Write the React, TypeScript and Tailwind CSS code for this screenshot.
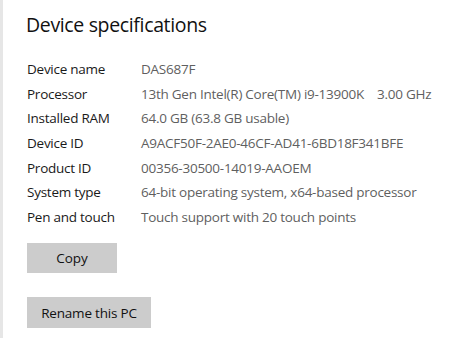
const specs = [
  { label: 'Device name', value: 'DAS687F' },
  { label: 'Processor', value: '13th Gen Intel(R) Core(TM) i9-13900K    3.00 GHz' },
  { label: 'Installed RAM', value: '64.0 GB (63.8 GB usable)' },
  { label: 'Device ID', value: 'A9ACF50F-2AE0-46CF-AD41-6BD18F341BFE' },
  { label: 'Product ID', value: '00356-30500-14019-AAOEM' },
  { label: 'System type', value: '64-bit operating system, x64-based processor' },
  { label: 'Pen and touch', value: 'Touch support with 20 touch points' },
]

export default function App() {
  return (
    <div className="flex h-[338px] w-[463px] bg-white font-['Open_Sans',sans-serif] overflow-hidden">
      <div className="w-[3px] shrink-0 bg-[#e6e6e6]" />
      <div className="flex flex-col pl-[24px] pt-[11px]">
        <h2 className="-ml-px text-[19.5px] leading-[28px] text-[#111] tracking-[-0.35px]">Device specifications</h2>

        <div className="mt-[18px] flex flex-col">
          {specs.map((s) => (
            <div key={s.label} className="flex h-[24.6px] items-center text-[13.5px] tracking-[-0.25px]">
              <span className="w-[114px] shrink-0 text-[#1a1a1a]">{s.label}</span>
              <span className="whitespace-pre text-[#5f5f5f]">{s.value}</span>
            </div>
          ))}
        </div>

        <button className="mt-[14px] h-[30px] w-[90px] bg-[#cccccc] text-[13.5px] text-[#111]">Copy</button>
        <button className="mt-[24px] h-[31px] w-[124px] bg-[#cccccc] text-[13.5px] text-[#111] tracking-[-0.2px]">Rename this PC</button>
      </div>
    </div>
  )
}
